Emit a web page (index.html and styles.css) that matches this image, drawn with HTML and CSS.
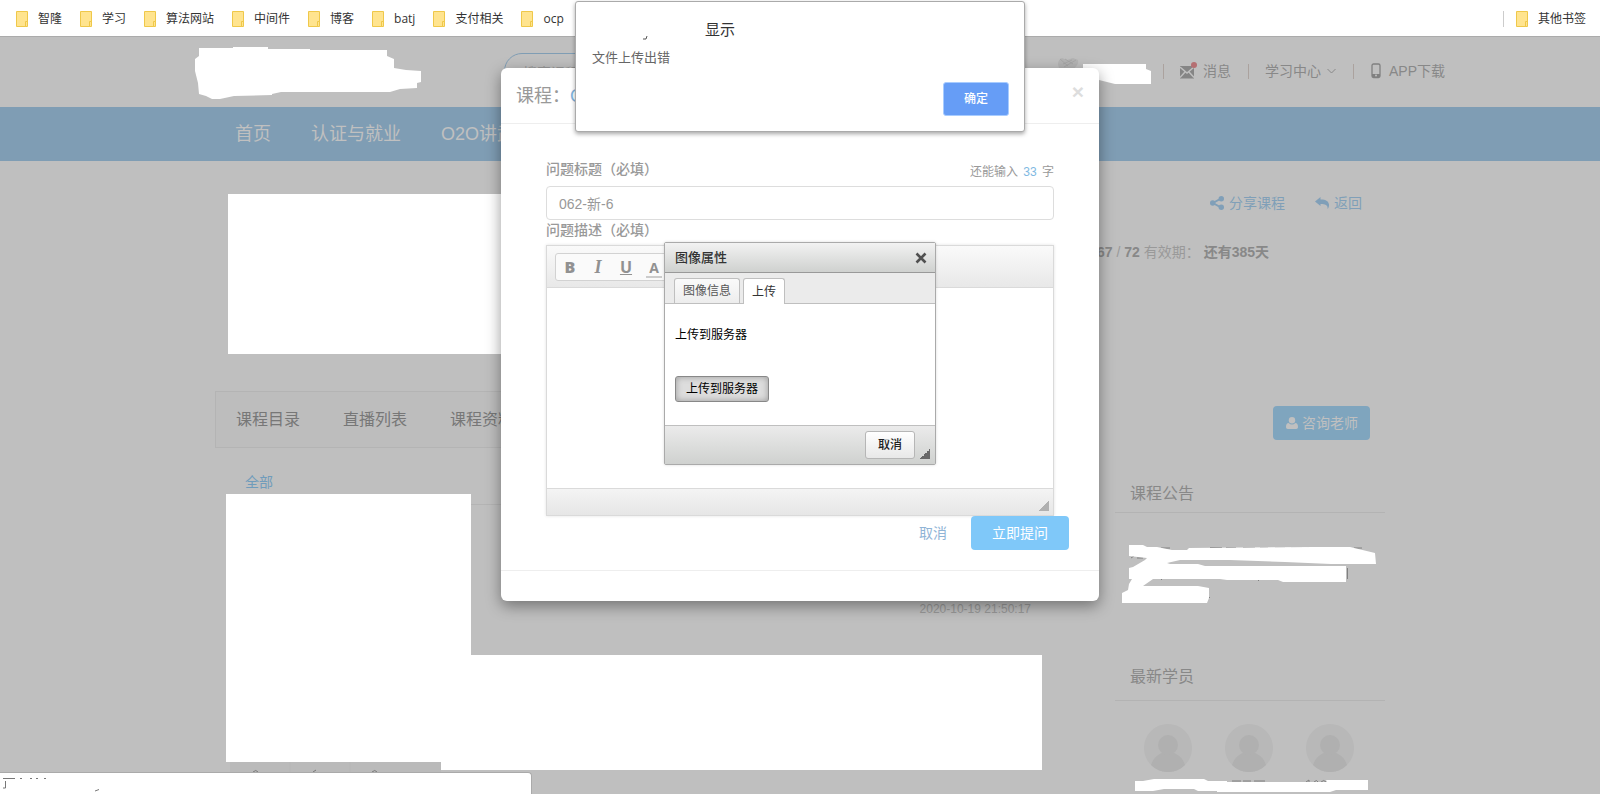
FILE: index.html
```
<!DOCTYPE html>
<html lang="zh-CN">
<head>
<meta charset="utf-8">
<title>课程</title>
<link rel="stylesheet" href="styles.css">
</head>
<body>
<svg class="defs" aria-hidden="true">
  <symbol id="folder" viewBox="0 0 12 16"><path d="M.5.5h11v12h-1v3H.5z" fill="#ffe48f" stroke="#efc84a"/><path d="M9.500 10.500h2v5h-2z" fill="#ffe48f" stroke="#efc84a"/></symbol>
  <symbol id="person" viewBox="0 0 48 48"><circle cx="24" cy="24" r="24" fill="#b8b8b8"/><path d="M7 41c3-9 10-13 17-13s14 4 17 13a24 24 0 0 1-34 0z" fill="#b0b0b0"/><circle cx="24" cy="21" r="10" fill="#b0b0b0"/></symbol>
</svg>

<nav class="bookmarks">
  <a href="#"><svg><use href="#folder"/></svg>智隆</a>
  <a href="#"><svg><use href="#folder"/></svg>学习</a>
  <a href="#"><svg><use href="#folder"/></svg>算法网站</a>
  <a href="#"><svg><use href="#folder"/></svg>中间件</a>
  <a href="#"><svg><use href="#folder"/></svg>博客</a>
  <a href="#"><svg><use href="#folder"/></svg>batj</a>
  <a href="#"><svg><use href="#folder"/></svg>支付相关</a>
  <a href="#"><svg><use href="#folder"/></svg>ocp</a>
  <span class="bookmarks-end"><a href="#"><svg><use href="#folder"/></svg>其他书签</a></span>
</nav>

<div class="page">
  <header class="site-header">
    <input class="search" type="text" aria-label="搜索" placeholder="搜索课程">
    <div class="user-links">
      <a href="#"><svg class="i-mail" viewBox="0 0 18 18"><path d="M0 4h14v12.500H0z" fill="#858585"/><path d="m0 5 7 6 7-6M0 15.500l5-5.500M14 15.500 9 10" fill="none" stroke="#bfbfbf" stroke-width="1.500"/><circle cx="14" cy="3" r="3" fill="#b56f72"/></svg>消息</a>
      <a href="#">学习中心<svg class="i-chev" viewBox="0 0 9 8"><path d="m.5 2 4 4 4-4" fill="none" stroke="#888"/></svg></a>
      <a href="#"><svg class="i-phone" viewBox="0 0 12 16"><rect x="2" y="1" width="8" height="13.500" rx="1.500" fill="none" stroke="#808080" stroke-width="1.300"/><path d="M2 11h8v3H2z" fill="#808080"/><circle cx="6" cy="12.500" r="1" fill="#bfbfbf"/></svg>APP下载</a>
    </div>
  </header>
  <nav class="main-nav"><div class="container nav-row"><a href="#">首页</a><a href="#">认证与就业</a><a href="#">O2O讲武堂</a></div></nav>

  <div class="container course">
    <div class="course-actions">
      <a href="#"><svg class="i-act" viewBox="0 0 14 14"><path d="m11 2.500-8 4.500 8 4.500" fill="none" stroke="#809fb8" stroke-width="2"/><g fill="#809fb8"><circle cx="11.300" cy="2.700" r="2.700"/><circle cx="2.700" cy="7" r="2.700"/><circle cx="11.300" cy="11.300" r="2.700"/></g></svg>分享课程</a>
      <a href="#"><svg class="i-act" viewBox="0 0 14 14"><path d="M0 5.500 5.500 1v2.500c6 0 8 2 8.500 5 .2 2-.6 3.500-1.500 4.500.6-3.500-1.500-5-7-5V10z" fill="#809fb8"/></svg>返回</a>
    </div>
    <p class="validity"><b>67</b> / <b>72</b> 有效期：<b class="remain">还有385天</b></p>
  </div>

  <div class="container columns">
    <main class="main-col">
      <div class="tabs"><a href="#">课程目录</a><a href="#">直播列表</a><a href="#">课程资料</a></div>
      <div class="filter"><a href="#">全部</a></div>
      <time class="stamp">2020-10-19 21:50:17</time>
    </main>
    <aside class="side-col">
      <button class="consult" type="button"><svg viewBox="0 0 12 12"><path d="M0 10c0-2.500 1-4 2.600-4a5 5 0 0 0 6.800 0C11 6 12 7.500 12 10c0 1.300-.7 2-1.800 2H1.800C.7 12 0 11.300 0 10z" fill="#c0c0c0"/><circle cx="6" cy="3.200" r="3.200" fill="#c0c0c0"/></svg>咨询老师</button>
      <h2>课程公告</h2>
      <div class="notice"></div>
      <h2 class="roomy">最新学员</h2>
      <div class="members"><svg><use href="#person"/></svg><svg><use href="#person"/></svg><svg><use href="#person"/></svg></div>
    </aside>
  </div>
</div>

<svg class="masks" width="1600" height="794" viewBox="0 0 1600 794" aria-hidden="true">
  <path d="M230 762h211v10H230z" fill="#bababa"/><path d="M290 762v10M350 762v10" stroke="#b6b6b6"/>
  <path d="M253 772q3-3 5 0M313 772l3-2M372 772q3-3 5 0" fill="none" stroke="#777"/>
  <path d="M1059 68c-2-5-1-8 3-10l5 2 6-2 5 2c1 4-2 6-3 8z" fill="#b3b3b3"/><path d="m1060 59 8 7m-3-7 8 5m-9 3 12-7m-13 4 9-4" stroke="#a0a0a0" stroke-width=".7"/>
  <path d="M1161 548h9M1210 547.500h12m4 0h10m7 0h12m5 0h8m7 0h10m6 0h11m5 0h10M1354 548h8M1131 558l3-2m3 2h6M1347.500 568v11M1161 579.500h1M1258 580.500h1M1209 597.500h1M1232 781h9m2 0h8m3 0h11M1306 782l3-2v2m5 0q3-3 4 0m3 0q3-3 5 0" fill="none" stroke="#808080"/>
  <g fill="#fff">
    <path d="M228 194h274v160H228zM226 494h245v161h571v115H441v-8H226z"/>
    <path d="M199 48 233 48 233 47 268 47 268 49 310 49 310 50 387 50 387 56 394 59 394 68 406 70 421 71 421 82 417 83 417 88 400 89 390 92 281 92 272 94 272 95 234 96 220 99 212 99 206 96 199 94 198 83 195 71 195 59 199 56z"/>
    <path d="M1083 64 1146 64 1146 69 1151 71 1151 84 1115 84 1099 80 1083 80z"/>
    <path d="M1129 545 1143 545 1147 547 1157 547 1172 550 1187 550 1189 548 1315 547 1350 547 1375 553 1376 564 1331 564 1285 562 1230 560 1180 560 1167 563 1170 564 1198 564 1205 566 1346 566 1346 582 1283 582 1278 580 1227 580 1220 579 1153 579 1143 586 1198 586 1209 588 1209 598 1207 603 1122 603 1122 593 1128 590 1129 584 1132 579 1129 579 1129 568 1133 567 1145 560 1147 558 1129 556z"/>
    <path d="M1135 781 1143 781 1154 779 1204 779 1208 781 1227 781 1227 782 1327 782 1326 780 1368 780 1368 790 1336 790 1330 792 1217 792 1217 791 1198 791 1194 789 1164 789 1153 791 1135 791z"/>
  </g>
</svg>

<section class="modal">
  <header class="modal-head"><h1>课程：<a href="#">O2O</a></h1><button class="modal-x" type="button" aria-label="关闭">×</button></header>
  <form class="modal-body">
    <div class="label-row"><label for="q-title">问题标题（必填）</label><span class="counter">还能输入 <em>33</em> 字</span></div>
    <input id="q-title" class="q-title" type="text" value="062-新-6">
    <div class="label-row second"><label for="q-desc">问题描述（必填）</label></div>
    <div class="editor">
      <div class="toolbar"><div class="tool-group">
        <button type="button"><b>B</b></button><button type="button"><i>I</i></button><button type="button"><u>U</u></button><button type="button"><span class="tint">A</span></button>
      </div></div>
      <textarea id="q-desc" class="editor-text"></textarea>
      <div class="editor-foot"><span class="grip"></span></div>
    </div>
    <div class="form-actions"><button class="plain" type="button">取消</button><button class="primary" type="button">立即提问</button></div>
  </form>
  <footer class="modal-foot"></footer>
</section>

<section class="img-dialog">
  <header><h2>图像属性</h2><button type="button" aria-label="关闭"><svg viewBox="0 0 12 12"><path d="m1.500 1.500 9 9M10.500 1.500l-9 9" stroke="#505050" stroke-width="2.600"/></svg></button></header>
  <div class="img-tabs"><button type="button">图像信息</button><button class="on" type="button">上传</button></div>
  <div class="img-body"><p>上传到服务器</p><button type="button">上传到服务器</button></div>
  <footer><button type="button">取消</button><span class="grip"></span></footer>
</section>

<section class="alert" role="alertdialog">
  <svg class="alert-mark" viewBox="0 0 5 4"><path d="M4 0 3 3H0" fill="none" stroke="#555"/></svg>
  <h2>显示</h2>
  <p>文件上传出错</p>
  <div class="alert-foot"><button type="button">确定</button></div>
</section>

<div class="status"><svg viewBox="0 0 120 20"><path d="M3 5.500h12M5.500 8v7H3M20 5.500h2m8 0h2m4 0h2m6 0h2M95 18l4-1.500" fill="none" stroke="#777"/></svg></div>
</body>
</html>
```
FILE: styles.css
```
* { box-sizing: border-box; }
body {
  margin: 0;
  background: #bfbfbf;
  color: #888;
  font: 14px/20px "Liberation Sans", "Noto Sans CJK SC", sans-serif;
  height: 100vh;
  overflow: hidden;
}
h1, h2, p { margin: 0; font-weight: 400; }
a { color: inherit; text-decoration: none; }
button, input, textarea { font: inherit; color: inherit; }
button { padding: 0; border: 0; background: none; white-space: nowrap; }
.defs { position: absolute; width: 0; height: 0; }
.container { max-width: 1170px; margin: 0 auto; }

.bookmarks {
  display: flex;
  align-items: center;
  gap: 18px;
  height: 37px;
  padding: 1px 14px 0 16px;
  background: #fff;
  border-bottom: 1px solid #ababab;
  color: #333;
  font: 12px/16px "Open Sans", "Noto Sans CJK SC", sans-serif;
}
.bookmarks a { display: flex; align-items: center; gap: 10px; }
.bookmarks svg { width: 12px; height: 16px; }
.bookmarks-end { margin-left: auto; padding-left: 12px; border-left: 1px solid #ccc; }

.site-header { position: relative; display: flex; height: 70px; padding: 16px 155px 0 504px; }
.search {
  width: 360px;
  height: 36px;
  padding: 3px 18px 0;
  border: 1px solid #7f9db4;
  border-radius: 18px;
  background: transparent;
}
.search::placeholder { color: #999; }
.user-links { display: flex; align-items: center; height: 36px; margin-left: auto; }
.user-links a { display: flex; align-items: center; position: relative; padding: 0 17px; }
.user-links a::before { content: ""; position: absolute; left: 0; width: 1px; height: 15px; background: #aba29e; }
.user-links a:last-child { padding-right: 0; }
.i-mail { width: 18px; height: 18px; margin-right: 5px; }
.i-chev { width: 9px; height: 8px; margin-left: 6px; }
.i-phone { width: 12px; height: 16px; margin-right: 7px; }

.main-nav { background: #7f9db4; }
.nav-row { display: flex; gap: 40px; height: 54px; align-items: center; padding-left: 20px; color: #c0c0c0; font-size: 18px; }

.course { height: 230px; padding-top: 32px; }
.course-actions { display: flex; justify-content: flex-end; gap: 30px; padding-right: 23px; color: #809fb8; }
.course-actions a { display: flex; align-items: center; gap: 5px; }
.i-act { width: 14px; height: 14px; }
.validity { padding: 29px 116px 0 0; text-align: right; color: #999; }
.validity b { color: #888; }
.remain { margin-left: 4px; }

.columns { display: grid; grid-template-columns: minmax(0, 1fr) 270px; gap: 30px; }
.tabs { display: flex; align-items: center; gap: 43px; height: 57px; padding-left: 20px; border: 1px solid #b4b4b4; background: #bdbdbd; color: #777; font-size: 16px; }
.filter { height: 57px; margin-left: 15px; padding: 24px 15px 0; border-bottom: 1px solid #b4b4b4; color: #709cbb; }
.stamp { display: block; padding: 94px 54px 0 0; text-align: right; color: #999; font-size: 12px; }
.side-col h2 { padding: 0 15px 8px; border-bottom: 1px solid #b3b3b3; font-size: 16px; }
.side-col .roomy { padding-bottom: 13px; }
.consult { display: flex; align-items: center; gap: 4px; width: 97px; height: 34px; margin: 15px 15px 44px auto; padding: 0 13px; border-radius: 4px; background: #7fa5be; color: #c0c0c0; }
.consult svg { flex: none; width: 12px; height: 12px; }
.notice { height: 154px; }
.members { display: flex; justify-content: space-between; padding: 23px 31px 0 29px; }
.members svg { width: 48px; height: 48px; }

.masks { position: absolute; left: 0; top: 0; }

.modal {
  position: absolute;
  top: 68px;
  left: 50%;
  width: 598px;
  margin-left: -299px;
  border-radius: 6px;
  background: #fff;
  box-shadow: 0 5px 15px rgba(0, 0, 0, .4);
  color: #999;
}
.modal-head { display: flex; align-items: center; justify-content: space-between; height: 56px; padding: 0 15px; border-bottom: 1px solid #eee; }
.modal-head h1 { font-size: 18px; line-height: 24px; }
.modal-head a { color: #7fb4de; }
.modal-x { height: 28px; color: #ddd; font-size: 21px; font-weight: 700; line-height: 20px; padding-bottom: 8px; }
.modal-body { padding: 34px 30px 20px 45px; }
.label-row { display: flex; justify-content: space-between; align-items: center; height: 28px; padding-right: 15px; }
.label-row label { font-weight: 500; padding-bottom: 6px; }
.label-row.second { height: 25px; }
.counter { font-size: 12px; }
.counter em { color: #7fb9e2; font-style: normal; margin: 0 2px; }
.q-title { display: block; width: 508px; height: 34px; padding: 0 12px; border: 1px solid #ddd; border-radius: 4px; background: #fff; outline: 0; }
.editor { width: 508px; border: 1px solid #dadada; box-shadow: 0 0 3px rgba(0, 0, 0, .12); }
.toolbar { height: 42px; padding: 7px 8px; background: linear-gradient(#fafafa, #e8e8e8); border-bottom: 1px solid #dadada; }
.tool-group { display: flex; width: 150px; height: 28px; border: 1px solid #d2d2d2; border-radius: 3px; background: #fafafa; }
.tool-group button { width: 28px; color: #919191; font: 700 16px/24px "Open Sans", sans-serif; }
.tool-group i { font-family: "Liberation Serif", serif; font-size: 18px; }
.tint { display: inline-block; width: 16px; border-bottom: 2px solid #ccc; line-height: 17px; font-size: 14px; }
.editor-text { display: block; width: 100%; height: 200px; border: 0; resize: none; outline: 0; }
.editor-foot { display: flex; justify-content: flex-end; align-items: flex-end; height: 27px; padding: 4px; border-top: 1px solid #dadada; background: linear-gradient(#f4f4f4, #e6e6e6); }
.grip { width: 10px; height: 10px; background: linear-gradient(135deg, transparent 50%, #b0b0b0 50%); }
.form-actions { display: flex; justify-content: flex-end; gap: 24px; }
.plain { color: #90b4d6; }
.primary { width: 98px; height: 34px; border-radius: 4px; background: #7fc8f9; color: #fff; }
.modal-foot { height: 31px; border-top: 1px solid #eee; }

.img-dialog {
  position: absolute;
  top: 242px;
  left: 50%;
  width: 272px;
  margin-left: -136px;
  border: 1px solid #aaa;
  border-radius: 2px;
  background: #fff;
  box-shadow: 0 0 3px rgba(0, 0, 0, .15);
  color: #000;
  font-size: 12px;
}
.img-dialog header { display: flex; align-items: center; justify-content: space-between; height: 30px; padding: 0 8px 0 10px; border-bottom: 1px solid #999; background: linear-gradient(#f2f2f2, #cfd1cf); }
.img-dialog h2 { color: #333; font-size: 13px; font-weight: 500; }
.img-dialog header svg { display: block; width: 12px; height: 12px; }
.img-tabs { display: flex; align-items: flex-end; gap: 3px; height: 31px; padding-left: 9px; border-bottom: 1px solid #bfbfbf; background: #ebebeb; }
.img-tabs button { height: 25px; padding: 0 8px; border: 1px solid #bfbfbf; border-bottom: 0; border-radius: 3px 3px 0 0; background: linear-gradient(#fafafa, #ededed); color: #555; }
.img-tabs .on { height: 26px; margin-bottom: -1px; background: #fff; color: #333; }
.img-body { height: 121px; padding: 21px 10px; }
.img-body p { margin-bottom: 31px; }
.img-body button { width: 94px; height: 26px; border: 1px solid #888; border-radius: 3px; background: #ddd; box-shadow: inset 0 0 6px #999; }
.img-dialog footer { display: flex; justify-content: flex-end; gap: 5px; height: 39px; padding: 5px; border-top: 1px solid #bfbfbf; background: linear-gradient(#ebebeb, #cfd1cf); }
.img-dialog footer button { width: 50px; height: 28px; border: 1px solid #b6b6b6; border-radius: 3px; background: linear-gradient(#fff, #e8e8e8); color: #222; font-weight: 500; }
.img-dialog .grip { align-self: flex-end; background: linear-gradient(135deg, transparent 50%, #686868 50%); }

.alert {
  position: absolute;
  top: 1px;
  left: 50%;
  width: 450px;
  height: 131px;
  margin-left: -225px;
  padding: 19px 15px 15px 16px;
  border: 1px solid #aaa;
  border-radius: 3px;
  background: #fff;
  box-shadow: 0 2px 4px rgba(0, 0, 0, .35);
  color: #666;
  font-size: 13px;
}
.alert h2 { padding-left: 113px; color: #333; font-size: 15px; line-height: 18px; }
.alert p { padding-top: 9px; }
.alert-mark { position: absolute; left: 67px; top: 34px; width: 5px; height: 4px; }
.alert-foot { display: flex; justify-content: flex-end; padding-top: 14px; }
.alert-foot button { width: 66px; height: 34px; border: 1px solid #a8ccff; border-radius: 3px; background: #669df6; color: #fff; font-size: 12px; font-weight: 500; }

.status { position: absolute; left: 0; bottom: 0; width: 532px; height: 22px; border: solid #aaa; border-width: 1px 1px 0 0; border-radius: 0 4px 0 0; background: #fff; }
.status svg { display: block; width: 120px; height: 20px; }
```
